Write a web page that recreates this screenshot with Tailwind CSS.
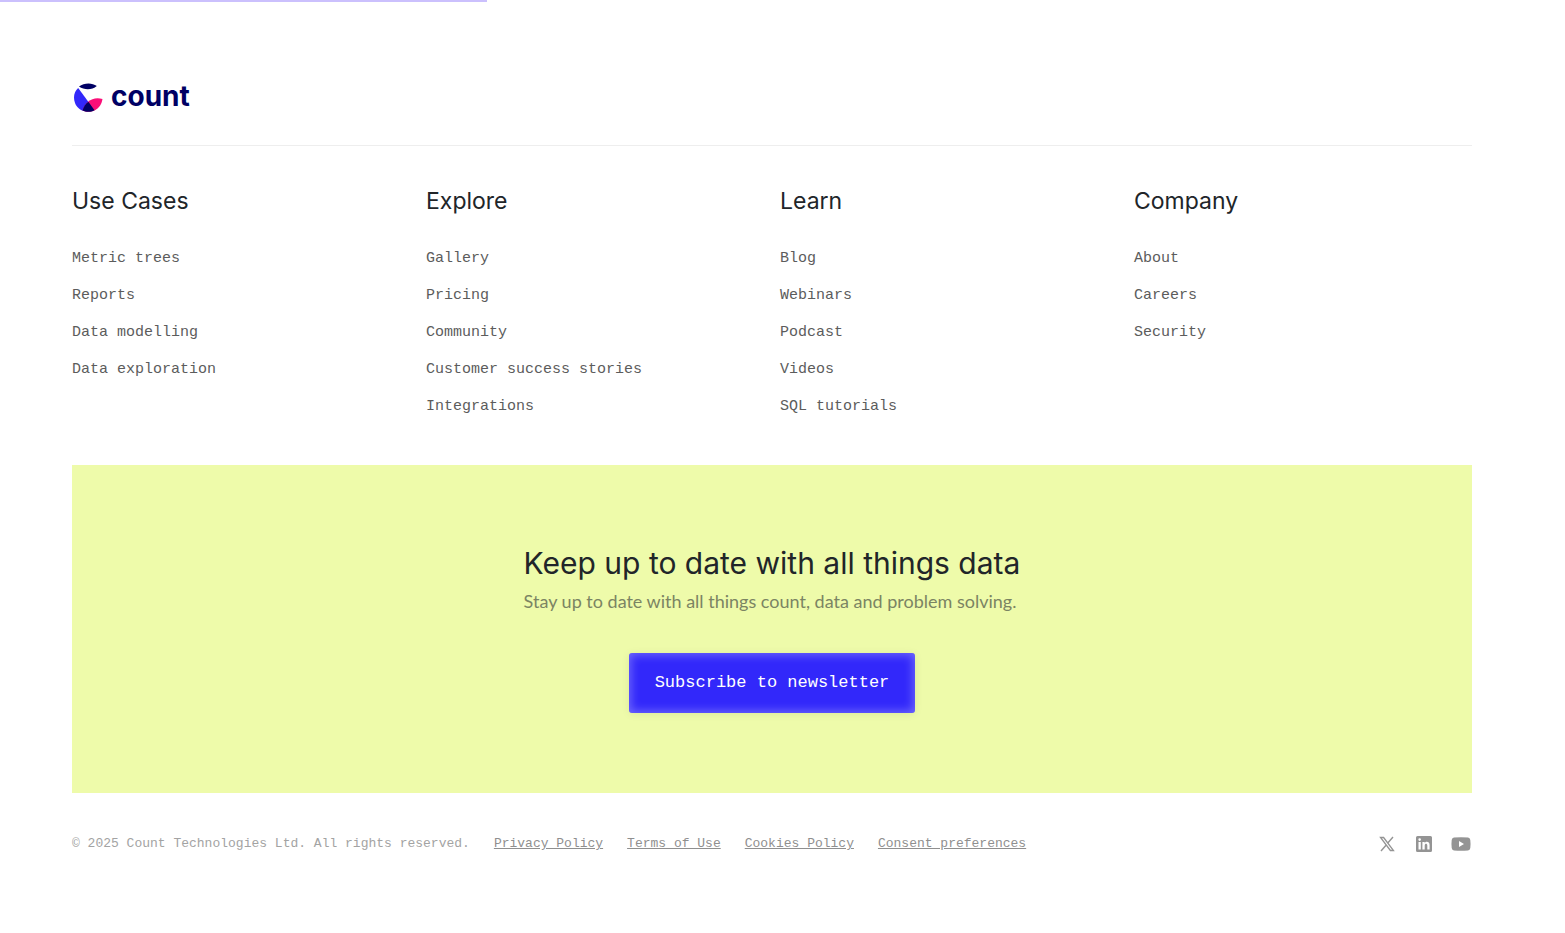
<!DOCTYPE html>
<html lang="en">
<head>
    <meta charset="UTF-8">
    <meta name="viewport" content="width=device-width, initial-scale=1.0">
    <title>Count</title>
    <script src="https://cdn.jsdelivr.net/npm/@tailwindcss/browser@4"></script>
</head>
<body class="min-h-screen bg-white font-['Liberation_Mono',monospace]">
    <!-- Scroll progress -->
    <div class="h-[2px] bg-[#cbc0fd]" style="width: 31.1%"></div>

    <footer class="pl-[72px] pr-[93px] pt-20 pb-20">
        <div class="flex h-16 items-start border-b border-[#eeeeee]">
            <a href="#" aria-label="count" class="flex items-start gap-2 pl-[2px]">
                <svg class="mt-px size-[29px]" viewBox="0 0 29 29" fill="none">
                    <path d="M5 3.600C10 -0.400 18 -0.600 22.800 3C18 7.300 10.500 7.300 5 3.600Z" fill="#000064"/>
                    <path d="M4.200 5L20 26.500C13 30.500 4 28 1 20C-1 14 0 9 4.200 5Z" fill="#3228fa"/>
                    <path d="M28.500 16C27.500 22 25 25 20.500 27.500C16 29.500 12 29 8.500 27.500C11 19 19 13 28.500 16Z" fill="#fa0f78"/>
                    <path d="M14.400 18.800L20.500 27.300C16.500 29.500 12 29 8.500 27.500C9.500 24 11.500 21 14.400 18.800Z" fill="#000064"/>
                </svg>
                <span class="font-['Inter',sans-serif] text-[28px] leading-7 font-bold text-[#000064]">count</span>
            </a>
        </div>

        <div class="grid grid-cols-4 gap-4 pt-[37px]">
            <nav aria-labelledby="use-cases">
                <h2 id="use-cases" class="font-['Inter',sans-serif] text-[23px] leading-9 text-[#212529]">Use Cases</h2>
                <ul class="mt-7 flex flex-col gap-[13px] text-[15px] leading-6 text-[#5c5c5c]">
                    <li><a href="#">Metric trees</a></li>
                    <li><a href="#">Reports</a></li>
                    <li><a href="#">Data modelling</a></li>
                    <li><a href="#">Data exploration</a></li>
                </ul>
            </nav>
            <nav aria-labelledby="explore">
                <h2 id="explore" class="font-['Inter',sans-serif] text-[23px] leading-9 text-[#212529]">Explore</h2>
                <ul class="mt-7 flex flex-col gap-[13px] text-[15px] leading-6 text-[#5c5c5c]">
                    <li><a href="#">Gallery</a></li>
                    <li><a href="#">Pricing</a></li>
                    <li><a href="#">Community</a></li>
                    <li><a href="#">Customer success stories</a></li>
                    <li><a href="#">Integrations</a></li>
                </ul>
            </nav>
            <nav aria-labelledby="learn">
                <h2 id="learn" class="font-['Inter',sans-serif] text-[23px] leading-9 text-[#212529]">Learn</h2>
                <ul class="mt-7 flex flex-col gap-[13px] text-[15px] leading-6 text-[#5c5c5c]">
                    <li><a href="#">Blog</a></li>
                    <li><a href="#">Webinars</a></li>
                    <li><a href="#">Podcast</a></li>
                    <li><a href="#">Videos</a></li>
                    <li><a href="#">SQL tutorials</a></li>
                </ul>
            </nav>
            <nav aria-labelledby="company">
                <h2 id="company" class="font-['Inter',sans-serif] text-[23px] leading-9 text-[#212529]">Company</h2>
                <ul class="mt-7 flex flex-col gap-[13px] text-[15px] leading-6 text-[#5c5c5c]">
                    <li><a href="#">About</a></li>
                    <li><a href="#">Careers</a></li>
                    <li><a href="#">Security</a></li>
                </ul>
            </nav>
        </div>

        <!-- Newsletter -->
        <section class="mt-[46px] flex flex-col items-center bg-[#eefbaa] py-20">
            <div>
                <h2 class="font-['Inter',sans-serif] text-[30px] leading-9 text-[#212529]">Keep up to date with all things data</h2>
                <p class="mt-1 font-['Lato',sans-serif] text-lg leading-8 text-[#7b8463]">Stay up to date with all things count, data and problem solving.</p>
            </div>
            <button type="button" class="mt-9 rounded-[3px] bg-[#3228fa] px-[26px] py-[18px] text-[17px] leading-6 text-white shadow-[inset_0_0_10px_2px_rgba(255,255,255,0.3),0_1px_8px_rgba(0,0,0,0.08)]">Subscribe to newsletter</button>
        </section>

        <div class="mt-10 flex items-center justify-between">
            <div class="flex items-center gap-6 text-[13px] leading-[22px] text-[#8f8f8f]">
                <span class="text-[#a3a3a3]">© 2025 Count Technologies Ltd. All rights reserved.</span>
                <a href="#" class="underline">Privacy Policy</a>
                <a href="#" class="underline">Terms of Use</a>
                <a href="#" class="underline">Cookies Policy</a>
                <a href="#" class="underline">Consent preferences</a>
            </div>
            <div class="flex items-center gap-[17px] pr-px text-[#949494]">
                <a href="#" aria-label="X">
                    <svg class="size-5" viewBox="0 0 20 20" fill="none" stroke="currentColor">
                        <path d="M3.500 3.500H6.600L16.500 16.500H13.400Z" stroke-width="1.300"/>
                        <path d="M16 3L11 8.700M9 11.200L4 17" stroke-width="1.400"/>
                    </svg>
                </a>
                <a href="#" aria-label="LinkedIn">
                    <svg class="size-5" viewBox="0 0 20 20" fill="currentColor">
                        <path fill-rule="evenodd" d="M3.500 2H16.500Q18 2 18 3.500V16.500Q18 18 16.500 18H3.500Q2 18 2 16.500V3.500Q2 2 3.500 2ZM4.500 8V15.500H6.800V8ZM5.650 4.300A1.300 1.300 0 1 0 5.650 6.900A1.300 1.300 0 1 0 5.650 4.300ZM8.400 8V15.500H10.700V11.500C10.700 9.300 13.300 9.300 13.300 11.500V15.500H15.600V10.900C15.600 7.400 12 7 10.700 9V8Z"/>
                    </svg>
                </a>
                <a href="#" aria-label="YouTube">
                    <svg class="size-5" viewBox="0 0 20 20" fill="currentColor">
                        <path fill-rule="evenodd" d="M3 3.500Q10 2.800 17 3.500Q19 3.700 19.300 6Q19.800 10 19.300 14Q19 16.300 17 16.500Q10 17.200 3 16.500Q1 16.300 0.700 14Q0.200 10 0.700 6Q1 3.700 3 3.500ZM8 7V13L13 10Z"/>
                    </svg>
                </a>
            </div>
        </div>
    </footer>
</body>
</html>
